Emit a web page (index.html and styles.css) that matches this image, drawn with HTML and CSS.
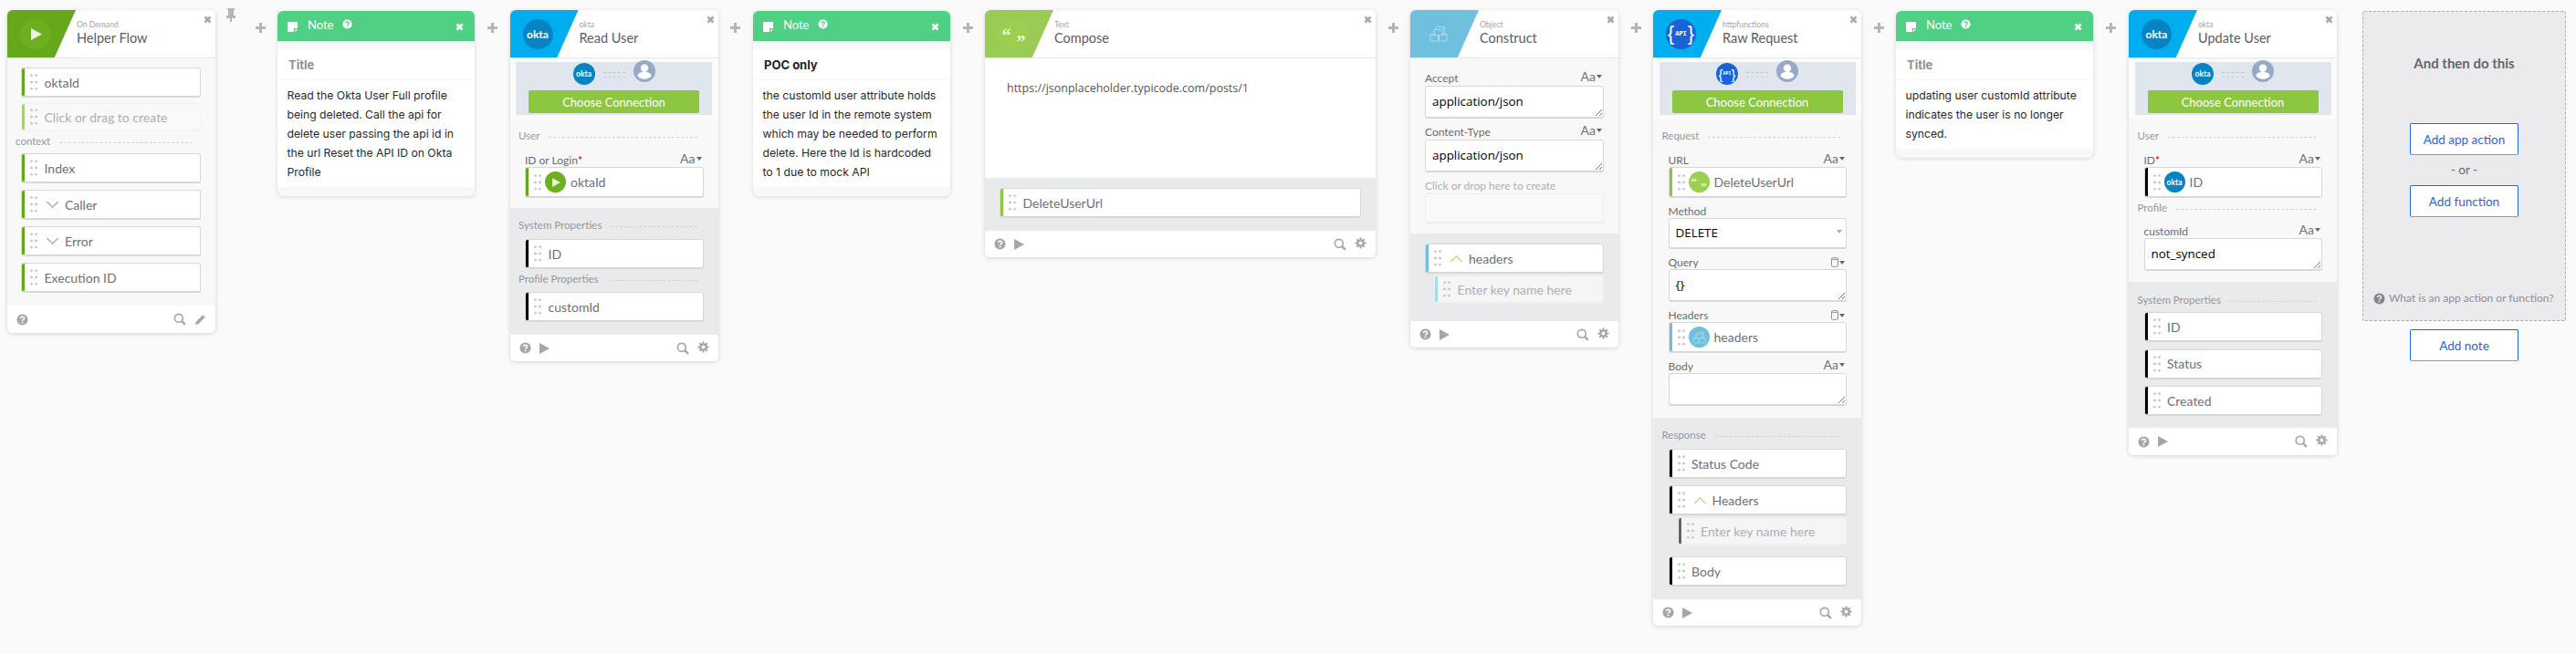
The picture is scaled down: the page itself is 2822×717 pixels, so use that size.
FILE: index.html
```html
<!DOCTYPE html>
<html lang="en">
<head>
<meta charset="utf-8">
<title>Flow</title>
<link rel="stylesheet" href="styles.css">
</head>
<body>
<svg class="defs" width="0" height="0" aria-hidden="true">
  <defs>
    <symbol id="i-close" viewBox="0 0 12 12"><path d="M2 2l8 8M10 2l-8 8" stroke="currentColor" stroke-width="3.4" fill="none"/></symbol>
    <symbol id="i-help" viewBox="0 0 14 14"><circle cx="7" cy="7" r="6.5" fill="currentColor"/><path class="q-mark" d="M4.8 5.4C4.9 3 9.2 3 9.2 5.3c0 1.600-2.200 1.600-2.200 3" stroke-width="1.700" fill="none"/><rect class="q-dot" x="6.100" y="9.400" width="1.800" height="1.800"/></symbol>
    <symbol id="i-search" viewBox="0 0 15 15"><circle cx="6.200" cy="6.200" r="4.800" stroke="currentColor" stroke-width="1.800" fill="none"/><path d="M9.800 9.800l4 4" stroke="currentColor" stroke-width="2.400"/></symbol>
    <symbol id="i-pencil" viewBox="0 0 14 14"><path d="M1 13l.8-3.500L9.500 1.800l2.700 2.700-7.700 7.700zM10.300 1l2.700 2.700 -.5.500L9.800 1.500z" fill="currentColor"/></symbol>
    <symbol id="i-gear" viewBox="0 0 14 14"><circle cx="7" cy="7" r="3.400" fill="none" stroke="currentColor" stroke-width="2.600"/><path d="M7 .5v2.500M7 11v2.500M.5 7H3M11 7h2.500M2.400 2.400l1.800 1.800M9.800 9.800l1.800 1.800M11.600 2.400L9.800 4.200M4.200 9.800l-1.800 1.800" stroke="currentColor" stroke-width="2.200"/></symbol>
    <symbol id="i-play" viewBox="0 0 12 13"><path d="M0 0l12 6.500L0 13z" fill="currentColor"/></symbol>
    <symbol id="i-note" viewBox="0 0 12 12"><path d="M0 0h12v7.500H7.500V12H0z" fill="#fff"/><path d="M9 9h3l-3 3z" fill="#fff"/></symbol>
    <symbol id="i-box" viewBox="0 0 20 18"><path d="M1 10.500h8.500V17H1zM10.500 10.500H19V17h-8.500zM5.500 4.500H14v6H5.500zM5.500 4.500L8 1.500h8.500L14 4.500M16.500 1.500v6L14 10.500M1 10.500l2-2h2.500M19 10.500l-1.500-2H14" fill="none" stroke="currentColor" stroke-width="1"/></symbol>
    <symbol id="i-user" viewBox="0 0 24 24"><circle cx="12" cy="12" r="12" fill="#98a9c8"/><circle cx="12" cy="8.800" r="4.200" fill="#fff"/><path d="M4.500 17.500c0-3.200 3-4.500 7.500-4.500s7.500 1.300 7.500 4.500c-1.500 2-4.500 3.200-7.500 3.200s-6-1.200-7.500-3.200z" fill="#fff"/></symbol>
    <symbol id="i-db" viewBox="0 0 8 11"><path d="M.5 1.500C.5 .2 7.500 .2 7.500 1.500v8c0 1.300-7 1.300-7 0zM.5 1.800c1.500 1 5.500 1 7 0" fill="none" stroke="currentColor" stroke-width="1"/></symbol>
  </defs>
</svg>

<main class="canvas">

  <!-- Trigger -->
  <section class="card">
    <header class="head">
      <div class="badge badge-dark"><span class="logo logo-dark"><svg class="logo-play"><use href="#i-play"/></svg></span></div>
      <div class="titles"><div class="kicker">On Demand</div><div class="title">Helper Flow</div></div>
      <svg class="close"><use href="#i-close"/></svg>
    </header>
    <div class="body tint pad-trigger">
      <div class="pill bar-dark"><span class="grip"></span><span class="pill-text">oktaId</span></div>
      <div class="pill pill-ghost ghost-trigger bar-dark-soft"><span class="grip"></span><span class="pill-text">Click or drag to create</span></div>
      <div class="group-label ctx"><span>context</span><i></i></div>
      <div class="pill bar-dark"><span class="grip"></span><span class="pill-text">Index</span></div>
      <div class="pill pill-gap bar-dark"><span class="grip"></span><span class="chev down"></span><span class="pill-text">Caller</span></div>
      <div class="pill pill-gap bar-dark"><span class="grip"></span><span class="chev down"></span><span class="pill-text">Error</span></div>
      <div class="pill pill-gap bar-dark"><span class="grip"></span><span class="pill-text">Execution ID</span></div>
    </div>
    <footer class="foot foot-tall">
      <svg class="f-icon"><use href="#i-help"/></svg>
      <span class="spacer"></span>
      <svg class="f-search"><use href="#i-search"/></svg>
      <svg class="f-icon"><use href="#i-pencil"/></svg>
    </footer>
  </section>

  <div class="link with-pin"><span class="pin"></span><span class="plus"></span></div>

  <!-- Note 1 -->
  <section class="note">
    <header class="note-head"><svg class="note-icon"><use href="#i-note"/></svg><span class="note-label">Note</span><svg class="note-help"><use href="#i-help"/></svg><span class="spacer"></span><svg class="note-close"><use href="#i-close"/></svg></header>
    <div class="note-title muted">Title</div>
    <p class="note-text">Read the Okta User Full profile being deleted. Call the api for delete user passing the api id in the url Reset the API ID on Okta Profile</p>
  </section>

  <div class="link gap-half"><span class="plus"></span></div>

  <!-- Read User -->
  <section class="card">
    <header class="head">
      <div class="badge badge-blue"><span class="logo logo-okta">okta</span></div>
      <div class="titles"><div class="kicker">okta</div><div class="title">Read User</div></div>
      <svg class="close"><use href="#i-close"/></svg>
    </header>
    <div class="conn">
      <div class="conn-icons"><span class="mini logo-okta">okta</span><span class="dashes"></span><svg class="conn-user"><use href="#i-user"/></svg></div>
      <button class="conn-btn" type="button">Choose Connection</button>
    </div>
    <div class="body tint pad-input">
      <div class="group-label"><span>User</span><i></i></div>
      <div class="field-head first"><span>ID or Login<b>*</b></span><span class="aa">Aa<em></em></span></div>
      <div class="pill in-field bar-dark"><span class="grip"></span><span class="token logo-dark"><svg class="token-play"><use href="#i-play"/></svg></span><span class="pill-text tight">oktaId</span></div>
    </div>
    <div class="body grey pad-output">
      <div class="group-label"><span>System Properties</span><i></i></div>
      <div class="pill out bar-black"><span class="grip"></span><span class="pill-text">ID</span></div>
      <div class="group-label gl-mid"><span>Profile Properties</span><i></i></div>
      <div class="pill out out-after-mid bar-black"><span class="grip"></span><span class="pill-text">customId</span></div>
    </div>
    <footer class="foot">
      <svg class="f-icon"><use href="#i-help"/></svg><svg class="f-play"><use href="#i-play"/></svg>
      <span class="spacer"></span>
      <svg class="f-search"><use href="#i-search"/></svg><svg class="f-icon f-gear"><use href="#i-gear"/></svg>
    </footer>
  </section>

  <div class="link gap-half"><span class="plus"></span></div>

  <!-- Note 2 -->
  <section class="note">
    <header class="note-head"><svg class="note-icon"><use href="#i-note"/></svg><span class="note-label">Note</span><svg class="note-help"><use href="#i-help"/></svg><span class="spacer"></span><svg class="note-close"><use href="#i-close"/></svg></header>
    <div class="note-title">POC only</div>
    <p class="note-text">the customId user attribute holds the user Id in the remote system which may be needed to perform delete. Here the Id is hardcoded to 1 due to mock API</p>
  </section>

  <div class="link"><span class="plus"></span></div>

  <!-- Compose -->
  <section class="card card-compose">
    <header class="head">
      <div class="badge badge-lime"><span class="logo logo-lime"><span class="q q1">“</span><span class="q q2">”</span></span></div>
      <div class="titles"><div class="kicker">Text</div><div class="title">Compose</div></div>
      <svg class="close"><use href="#i-close"/></svg>
    </header>
    <div class="compose-text">https://jsonplaceholder.typicode.com/posts/1</div>
    <div class="body grey compose-out">
      <div class="pill bar-lime"><span class="grip"></span><span class="pill-text">DeleteUserUrl</span></div>
    </div>
    <footer class="foot">
      <svg class="f-icon"><use href="#i-help"/></svg><svg class="f-play"><use href="#i-play"/></svg>
      <span class="spacer"></span>
      <svg class="f-search"><use href="#i-search"/></svg><svg class="f-icon f-gear"><use href="#i-gear"/></svg>
    </footer>
  </section>

  <div class="link"><span class="plus"></span></div>

  <!-- Construct -->
  <section class="card">
    <header class="head">
      <div class="badge badge-sky"><span class="logo logo-sky"><svg class="box"><use href="#i-box"/></svg></span></div>
      <div class="titles"><div class="kicker">Object</div><div class="title">Construct</div></div>
      <svg class="close"><use href="#i-close"/></svg>
    </header>
    <div class="body tint pad-construct">
      <div class="field-head"><span>Accept</span><span class="aa">Aa<em></em></span></div>
      <div class="area">application/json<span class="resize"></span></div>
      <div class="field-head"><span>Content-Type</span><span class="aa">Aa<em></em></span></div>
      <div class="area">application/json<span class="resize"></span></div>
      <div class="field-head ghost-label"><span>Click or drop here to create</span></div>
      <div class="area area-ghost"></div>
    </div>
    <div class="body grey pad-construct-out">
      <div class="pill bar-sky"><span class="grip"></span><span class="chev up"></span><span class="pill-text">headers</span></div>
      <div class="pill sub pill-ghost bar-sky-soft"><span class="grip"></span><span class="pill-text">Enter key name here</span></div>
    </div>
    <footer class="foot">
      <svg class="f-icon"><use href="#i-help"/></svg><svg class="f-play"><use href="#i-play"/></svg>
      <span class="spacer"></span>
      <svg class="f-search"><use href="#i-search"/></svg><svg class="f-icon f-gear"><use href="#i-gear"/></svg>
    </footer>
  </section>

  <div class="link"><span class="plus"></span></div>

  <!-- Raw Request -->
  <section class="card">
    <header class="head">
      <div class="badge badge-blue"><span class="logo logo-api">{<small>API</small>}</span></div>
      <div class="titles"><div class="kicker">httpfunctions</div><div class="title">Raw Request</div></div>
      <svg class="close"><use href="#i-close"/></svg>
    </header>
    <div class="conn">
      <div class="conn-icons"><span class="mini logo-api">{<small>API</small>}</span><span class="dashes"></span><svg class="conn-user"><use href="#i-user"/></svg></div>
      <button class="conn-btn" type="button">Choose Connection</button>
    </div>
    <div class="body tint pad-input pad-raw">
      <div class="group-label"><span>Request</span><i></i></div>
      <div class="field-head first"><span>URL</span><span class="aa">Aa<em></em></span></div>
      <div class="pill in-field bar-lime"><span class="grip"></span><span class="token logo-lime"><span class="q q1">“</span><span class="q q2">”</span></span><span class="pill-text tight">DeleteUserUrl</span></div>
      <div class="field-head"><span>Method</span></div>
      <div class="select">DELETE<em></em></div>
      <div class="field-head"><span>Query</span><span class="aa"><svg class="db"><use href="#i-db"/></svg><em></em></span></div>
      <div class="area">{}<span class="resize"></span></div>
      <div class="field-head"><span>Headers</span><span class="aa"><svg class="db"><use href="#i-db"/></svg><em></em></span></div>
      <div class="pill in-field bar-sky"><span class="grip"></span><span class="token logo-sky"><svg class="token-box"><use href="#i-box"/></svg></span><span class="pill-text tight">headers</span></div>
      <div class="field-head"><span>Body</span><span class="aa">Aa<em></em></span></div>
      <div class="area"><span class="resize"></span></div>
    </div>
    <div class="body grey pad-output">
      <div class="group-label"><span>Response</span><i></i></div>
      <div class="pill out bar-black"><span class="grip"></span><span class="pill-text">Status Code</span></div>
      <div class="pill pill-gap bar-black"><span class="grip"></span><span class="chev up"></span><span class="pill-text">Headers</span></div>
      <div class="pill sub pill-ghost bar-grey"><span class="grip"></span><span class="pill-text">Enter key name here</span></div>
      <div class="pill out-last bar-black"><span class="grip"></span><span class="pill-text">Body</span></div>
    </div>
    <footer class="foot">
      <svg class="f-icon"><use href="#i-help"/></svg><svg class="f-play"><use href="#i-play"/></svg>
      <span class="spacer"></span>
      <svg class="f-search"><use href="#i-search"/></svg><svg class="f-icon f-gear"><use href="#i-gear"/></svg>
    </footer>
  </section>

  <div class="link"><span class="plus"></span></div>

  <!-- Note 3 -->
  <section class="note">
    <header class="note-head"><svg class="note-icon"><use href="#i-note"/></svg><span class="note-label">Note</span><svg class="note-help"><use href="#i-help"/></svg><span class="spacer"></span><svg class="note-close"><use href="#i-close"/></svg></header>
    <div class="note-title muted">Title</div>
    <p class="note-text">updating user customId attribute indicates the user is no longer synced.</p>
  </section>

  <div class="link gap-wide"><span class="plus"></span></div>

  <!-- Update User -->
  <section class="card">
    <header class="head">
      <div class="badge badge-blue"><span class="logo logo-okta">okta</span></div>
      <div class="titles"><div class="kicker">okta</div><div class="title">Update User</div></div>
      <svg class="close"><use href="#i-close"/></svg>
    </header>
    <div class="conn">
      <div class="conn-icons"><span class="mini logo-okta">okta</span><span class="dashes"></span><svg class="conn-user"><use href="#i-user"/></svg></div>
      <button class="conn-btn" type="button">Choose Connection</button>
    </div>
    <div class="body tint pad-input pad-update">
      <div class="group-label"><span>User</span><i></i></div>
      <div class="field-head first"><span>ID<b>*</b></span><span class="aa">Aa<em></em></span></div>
      <div class="pill in-field bar-black"><span class="grip"></span><span class="token logo-okta">okta</span><span class="pill-text tight">ID</span></div>
      <div class="group-label gl-mid"><span>Profile</span><i></i></div>
      <div class="field-head first-b"><span>customId</span><span class="aa">Aa<em></em></span></div>
      <div class="area">not_synced<span class="resize"></span></div>
    </div>
    <div class="body grey pad-output update-out">
      <div class="group-label"><span>System Properties</span><i></i></div>
      <div class="pill out-near bar-black"><span class="grip"></span><span class="pill-text">ID</span></div>
      <div class="pill pill-gap bar-black"><span class="grip"></span><span class="pill-text">Status</span></div>
      <div class="pill pill-gap bar-black"><span class="grip"></span><span class="pill-text">Created</span></div>
    </div>
    <footer class="foot foot-tall">
      <svg class="f-icon"><use href="#i-help"/></svg><svg class="f-play"><use href="#i-play"/></svg>
      <span class="spacer"></span>
      <svg class="f-search"><use href="#i-search"/></svg><svg class="f-icon f-gear"><use href="#i-gear"/></svg>
    </footer>
  </section>

  <!-- Add panel -->
  <div class="add-col">
    <section class="add-panel">
      <h2 class="add-title">And then do this</h2>
      <button class="add-btn first-add" type="button">Add app action</button>
      <div class="add-or">- or -</div>
      <button class="add-btn" type="button">Add function</button>
      <div class="add-help"><svg class="add-help-icon"><use href="#i-help"/></svg><span>What is an app action or function?</span></div>
    </section>
    <button class="add-btn add-note" type="button">Add note</button>
  </div>
</main>
</body>
</html>
```
FILE: styles.css
```css
* { box-sizing: border-box; }
html, body { margin: 0; padding: 0; }
body { background: #fafafa; font-family: "Lato", "Liberation Sans", sans-serif; color: #5f6068; width: 2822px; height: 717px; overflow: hidden; }
.defs { position: absolute; }
.canvas { display: flex; align-items: flex-start; padding: 11px 0 0 8px; }
.spacer { flex: 1; }
.q-mark { stroke: var(--q, #fff); }
.q-dot { fill: var(--q, #fff); }

/* connectors */
.link { width: 38px; flex: none; display: flex; justify-content: center; padding-top: 14px; position: relative; }
.gap-half { width: 38.5px; }
.gap-wide { width: 39px; }
.with-pin { width: 68px; justify-content: flex-end; padding-right: 13.5px; }
.plus { display: block; width: 11px; height: 11px; background:
  linear-gradient(#b5b5b5, #b5b5b5) center/11px 3px no-repeat,
  linear-gradient(#b5b5b5, #b5b5b5) center/3px 11px no-repeat; }
.pin { position: absolute; left: 12px; top: -2px; width: 10px; height: 15px; background:
  linear-gradient(#b5b5b5, #b5b5b5) 1px 0/8px 2px no-repeat,
  linear-gradient(#b5b5b5, #b5b5b5) 0 8px/10px 3px no-repeat,
  linear-gradient(#b5b5b5, #b5b5b5) 2px 0/6px 9px no-repeat,
  linear-gradient(#b5b5b5, #b5b5b5) 4px 10px/2px 5px no-repeat; }

/* cards */
.card { flex: none; width: 228px; background: #fff; border-radius: 6px; box-shadow: 0 1px 5px rgba(0,0,0,.16); overflow: hidden; display: flex; flex-direction: column; }
.card-compose { width: 428px; }

.head { height: 53px; flex: none; position: relative; background: #fff; border-bottom: 1px solid #e4e5e7; display: flex; }
.badge { width: 75px; height: 52px; flex: none; clip-path: polygon(0 0, 100% 0, 69% 100%, 0 100%); display: flex; align-items: center; padding-left: 14px; }
.badge-dark { background: #66a81c; }
.badge-blue { background: #00aeef; }
.badge-lime { background: #9bca57; }
.badge-sky { background: #6fc0de; }
.logo { width: 33px; height: 33px; border-radius: 50%; display: flex; align-items: center; justify-content: center; position: relative; color: #fff; flex: none; }
.logo-dark { background: #6cb021; color: #fff; }
.logo-lime { background: #9ccf4f; color: #fff; }
.logo-sky { background: #6fc0de; color: #a9dbee; }
.logo-okta { background: #0783c3; color: #fff; font: 700 8.5px "Lato", sans-serif; }
.logo-api { background: #1a62d8; color: #fff; font: 400 22px "Liberation Sans", sans-serif; white-space: nowrap; }
.logo-api small { font: 700 7px "Liberation Mono", monospace; margin: 0 1px; }
.logo.logo-okta { font-size: 12px; }
.logo-play { width: 12px; height: 13px; color: #e8f3d8; margin-left: 3px; }
.box { width: 20px; height: 18px; }
.q { font: 700 20px/20px "Liberation Serif", serif; position: absolute; color: #f0f7e4; }
.logo .q1 { left: 4.500px; top: 8px; }
.logo .q2 { left: 20.500px; top: 15px; }
.titles { margin-left: 1px; padding-top: 11px; }
.kicker { font-size: 8.600px; line-height: 11px; color: #a3a4a8; }
.title { font-size: 14.500px; line-height: 18px; color: #5b5c60; margin-top: 0; }
.close { position: absolute; right: 4px; top: 6px; width: 9px; height: 9px; color: #a8a8a8; }

/* bodies */
.body { flex: none; }
.tint { background: #f8f8f8; }
.grey { background: #e9eaec; }
.pad-trigger { padding: 10px 16px 14px 15px; }

.foot { height: 29px; flex: none; background: #fff; display: flex; align-items: center; padding: 0 10px; color: #a6a6a6; }
.foot-tall { height: 30px; }
.f-icon { width: 13px; height: 13px; color: #a6a6a6; }
.f-gear { margin-top: -3px; }
.f-search { width: 14px; height: 14px; color: #a6a6a6; margin-right: 9px; }
.f-play { width: 11px; height: 12px; margin-left: 9px; color: #a6a6a6; }

/* pills */
.pill { height: 33px; background: #fff; border: 1px solid #d6d7d9; border-bottom-width: 2px; border-radius: 3px; display: flex; align-items: center; position: relative; overflow: hidden; }
.pill::before { content: ""; width: 4px; align-self: stretch; flex: none; margin: -1px 0 -2px -1px; background: var(--bar); }
.bar-dark { --bar: #66a81c; }
.bar-dark-soft { --bar: #a9cd7c; }
.bar-black { --bar: #000; }
.bar-lime { --bar: #8dc63f; }
.bar-sky { --bar: #6fc0de; }
.bar-sky-soft { --bar: #a8d9ea; }
.bar-grey { --bar: #666; }
.pill-ghost { background: #f5f5f6; border-color: #eeeeef; }
.pill-ghost .pill-text { color: #aeaeb2; }
.ghost-trigger { background: #f9f9f9; border-color: #f3f3f3; height: 31px; margin-top: 6px; }
.grip { width: 10px; height: 22px; margin-left: 5px; flex: none; background-image: radial-gradient(circle, #c8c8ca 1.200px, transparent 1.500px); background-size: 5px 7.300px; }
.pill-text { font-size: 14px; color: #6f7074; margin-left: 6.500px; white-space: nowrap; }
.pill-text.tight { margin-left: 5px; }
.pill-gap { margin-top: 7px; }

.group-label { display: flex; align-items: center; font-size: 11.500px; color: #97989c; height: 14px; line-height: 14px; margin-left: -7px; margin-right: 7px; }
.group-label i { flex: 1; border-top: 1px dashed #d3d3d5; margin: 2px 0 0 10px; }
.group-label.ctx { margin: 4px 9px 6px -6px; }

/* connection */
.conn { height: 66px; flex: none; padding: 4px 6px; background: linear-gradient(#e1e5ed, #e1e5ed) 6.500px 4px/215px 58px no-repeat, #fbfbfb; }
.conn-icons { height: 31px; display: flex; align-items: flex-start; justify-content: center; padding-top: 1px; }
.mini { width: 24px; height: 24px; border-radius: 50%; display: flex; align-items: center; justify-content: center; font-size: 8.500px; flex: none; }
.mini.logo-api { font-size: 15px; }
.mini.logo-api small { font-size: 5px; margin: 0; }
.dashes { width: 24px; height: 6px; margin: 10px 9px 0; border-top: 1px dashed #b7c4d8; border-bottom: 1px dashed #cbd3e0; flex: none; }
.conn-user { width: 24px; height: 24px; flex: none; margin-top: -3px; }
.conn-btn { display: block; width: 187px; height: 25px; margin: 0 auto; border: 0; border-radius: 2px; background: #8dc63f; color: #fff; font: 400 13px "Lato", sans-serif; padding: 0; }

/* input section */
.pad-input { padding: 12px 16px 11px 16.500px; }
.pad-raw { padding-bottom: 13px; }
.pad-update { padding-bottom: 12px; }
.field-head { display: flex; justify-content: space-between; align-items: flex-end; font-size: 12px; line-height: 15px; color: #6a6b6f; height: 15px; margin-top: 7px; }
.field-head.first { margin-top: 12px; }
.field-head.first-b { margin-top: 11px; }
.field-head b { color: #e6212a; font-weight: 700; }
.aa { font-size: 14px; color: #737478; display: inline-flex; align-items: center; margin-right: 2px; line-height: 15px; position: relative; top: -2px; }
.aa em { width: 0; height: 0; margin-left: 1px; border: 3px solid transparent; border-top: 4px solid #666; border-bottom: 0; }
.db { width: 8px; height: 11px; color: #8f9094; }
.in-field { height: 34px; }
.area { background: #fff; border: 1px solid #d6d7d9; border-bottom-width: 2px; border-radius: 3px; height: 36px; padding: 7px 7px 0; font: 400 13.400px/19px "Open Sans", sans-serif; color: #000; position: relative; }
.resize { position: absolute; right: 1px; bottom: 1px; width: 8px; height: 8px; background: linear-gradient(135deg, transparent 0 55%, #777 55% 62%, transparent 62% 78%, #777 78% 85%, transparent 85%); }
.area-ghost { background: #f9f9f9; border-color: #eee; height: 33px; }
.select { background: #fff; border: 1px solid #d6d7d9; border-bottom-width: 2px; border-radius: 3px; height: 34px; padding: 6px 7px 0; font: 400 13.400px/19px "Open Sans", sans-serif; color: #000; position: relative; }
.select em { position: absolute; right: 4px; top: 12px; border: 2px solid transparent; border-width: 4px 3px 0; border-top-color: #aaa; }
.group-label.gl-mid { margin-top: 4px; }

/* output section */
.pad-output { padding: 12px 16px 14px 16.500px; }
.pill.out { margin-top: 8px; }
.pill.out-after-mid { margin-top: 7px; }
.pill.out-near { margin-top: 6px; }
.pill.out-last { margin-top: 12px; }
.pill.sub { margin: 2px 0 0 10px; height: 31px; }
.update-out { padding-top: 13px; padding-bottom: 13px; }
.update-out .pill-gap { margin-top: 7.500px; }

/* compose */
.compose-text { height: 131px; padding: 24px 24px 0; font: 400 12.500px/17px "Open Sans", sans-serif; color: #555; flex: none; }
.compose-out { height: 58px; padding: 11px 16px; }

/* construct */
.pad-construct { padding: 14px 16px 11px; }
.pad-construct .field-head { margin-bottom: 1px; }
.pad-construct .field-head:first-child { margin-top: 0; }
.ghost-label { color: #aeaeb2; }
.pad-construct-out { padding: 11px 16px 19px; }

.chev { width: 12px; height: 11px; flex: none; margin-left: 9px; position: relative; }
.chev.down::after, .chev.up::after { content: ""; position: absolute; left: 2px; width: 8px; height: 8px; transform: rotate(45deg); }
.chev.down::after { top: -1.300px; border-right: 1.400px solid #8a8a8a; border-bottom: 1.400px solid #8a8a8a; }
.chev.up::after { top: 4.300px; border-left: 1.500px solid #f5a742; border-top: 1.500px solid #f5a742; }
.chev + .pill-text { margin-left: 8px; }
.token { width: 23px; height: 23px; flex: none; margin-left: 3px; border-radius: 50%; display: flex; align-items: center; justify-content: center; position: relative; }
.token-play { width: 9px; height: 10px; color: #eaf5dc; margin-left: 2px; }
.token-box { width: 15px; height: 14px; }
.token .q { font-size: 13px; line-height: 13px; }
.token .q1 { left: 3px; top: 5px; }
.token .q2 { left: 13.500px; top: 10px; }

/* notes */
.note { flex: none; width: 216px; margin-top: 1px; background: #f8f8f8; border-radius: 6px; box-shadow: 0 1px 5px rgba(0,0,0,.13); overflow: hidden; padding-bottom: 10px; }
.note-head { height: 33px; background: #4fd085; display: flex; align-items: center; padding: 0 12px 0 11px; color: #fff; }
.note-icon { width: 11px; height: 11px; margin-top: 2px; }
.note-label { font: 400 13px "Lato", sans-serif; margin-left: 11px; position: relative; top: -2px; }
.note-help { width: 11px; height: 11px; margin-left: 10px; color: #fff; position: relative; top: -2px; --q: #4fd085; }
.note-close { width: 9px; height: 9px; color: #fff; margin-top: 1px; }
.note-title { margin-top: 9px; height: 34px; background: #fff; border-bottom: 1px solid #f6f6f6; padding: 9px 12px 0; font: 700 13px/16px "Inter", sans-serif; color: #222; }
.note-title.muted { color: #8e8f96; }
.note-text { margin: 0; background: #fff; padding: 6px 8px 6px 10.500px; font: 400 12.200px/21px "Inter", sans-serif; color: #27282c; }

/* add */
.add-col { flex: none; margin-left: 28px; margin-top: 1px; width: 223px; display: flex; flex-direction: column; }
.add-panel { height: 340px; background: #ebebed; border: 1px dashed #adadad; border-radius: 2px; display: flex; flex-direction: column; align-items: center; position: relative; }
.add-title { margin: 47px 0 0; font: 700 15px/18px "Lato", sans-serif; color: #66676c; }
.add-btn { width: 119px; height: 35px; padding: 0; border: 1px solid #1f66e0; border-bottom-color: #6e9de8; border-radius: 2px; background: #fff; color: #1f66e0; font: 400 13.500px "Lato", sans-serif; }
.first-add { margin-top: 57px; }
.add-or { font: 400 13.500px/33px "Lato", sans-serif; color: #66676c; }
.add-help { position: absolute; left: 11px; top: 306px; display: flex; align-items: center; font: 400 12px/16px "Lato", sans-serif; color: #8d8e94; white-space: nowrap; }
.add-help-icon { width: 13px; height: 13px; margin-right: 4px; color: #85868c; --q: #ebebed; }
.add-note { align-self: center; margin-top: 9px; }
```
